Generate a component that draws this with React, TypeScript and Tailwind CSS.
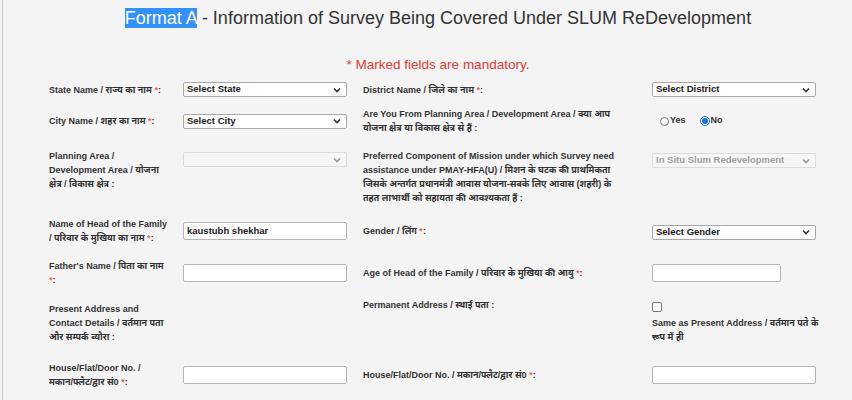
import React from 'react'

const font = { fontFamily: '"Liberation Sans", Arial, "Noto Sans", sans-serif' }

function Star() {
  return <span className="text-[#f06060]">*</span>
}

function Chevron({ muted }: { muted?: boolean }) {
  return (
    <svg width="8" height="6" viewBox="0 0 8 6" className="shrink-0">
      <path d="M1 1.5l3 3 3-3" fill="none" stroke={muted ? '#9a9a9a' : '#333'} strokeWidth="1.6" />
    </svg>
  )
}

function SelectBox({ text, disabled, className = '' }: { text?: string; disabled?: boolean; className?: string }) {
  return (
    <div
      className={`flex h-[15px] w-[164px] items-center justify-between rounded-[2px] border pl-[3px] pr-[5px] text-[9.5px] font-bold ${
        disabled ? 'border-[#dcdcdc] bg-[#f6f6f6] text-[#a0a0a0]' : 'border-[#a9a9a9] bg-white text-[#222]'
      } ${className}`}
    >
      <span>{text}</span>
      <Chevron muted={disabled} />
    </div>
  )
}

function TextBox({ value, w = 'w-[164px]' }: { value?: string; w?: string }) {
  return (
    <div className={`flex h-[18px] ${w} items-center rounded-[2px] border border-[#b5b5b5] bg-white pl-[3px] text-[9.5px] font-bold text-[#222]`}>
      {value}
    </div>
  )
}

function Label({ children, className = '' }: { children: React.ReactNode; className?: string }) {
  return <div className={`text-[9px] font-bold leading-[14px] text-[#333] ${className}`}>{children}</div>
}

const row = 'grid grid-cols-[134px_180px_289px_180px] pl-[46px]'

export default function App() {
  return (
    <div className="min-h-[400px] w-full bg-[#f4f4f4] pl-[2px]" style={font}>
      <div className="border-l border-[#c6c6c6] pt-[8px] pb-[20px]">
        <div className="pl-[21px]">
          <h1 className="text-center text-[18px] leading-[20px] text-[#333]">
            <span className="bg-[#3390ff] text-white">Format A</span> - Information of Survey Being Covered Under SLUM ReDevelopment
          </h1>

          <p className="mt-[28px] text-center text-[13.5px] leading-[18px] text-[#e33a35]">* Marked fields are mandatory.</p>
        </div>

        {/* row 1 */}
        <div className={`${row} mt-[5px] h-[21px] items-center`}>
          <Label>State Name / राज्य का नाम <Star />:</Label>
          <SelectBox text="Select State" />
          <Label>District Name / जिले का नाम <Star />:</Label>
          <SelectBox text="Select District" />
        </div>

        {/* row 2 */}
        <div className={`${row} mt-[7px] h-[28px] items-center`}>
          <Label>City Name / शहर का नाम <Star />:</Label>
          <SelectBox text="Select City" />
          <Label className="pr-[20px]">Are You From Planning Area / Development Area / क्या आप योजना क्षेत्र या विकास क्षेत्र से हैं :</Label>
          <div className="flex items-center pl-[8px] text-[9px] font-bold text-[#333]">
            <span className="h-[9px] w-[9px] rounded-full border border-[#767676] bg-white" />
            <span className="ml-[1px]">Yes</span>
            <span className="ml-[14px] flex h-[10px] w-[10px] items-center justify-center rounded-full border border-[#1a73e8] bg-white">
              <span className="h-[6px] w-[6px] rounded-full bg-[#1a73e8]" />
            </span>
            <span className="ml-[1px]">No</span>
          </div>
        </div>

        {/* row 3 */}
        <div className={`${row} mt-[14px] items-start`}>
          <Label className="pr-[15px]">Planning Area / Development Area / योजना क्षेत्र / विकास क्षेत्र :</Label>
          <SelectBox disabled className="mt-[3px]" />
          <Label className="pr-[34px]">
            Preferred Component of Mission under which Survey need assistance under PMAY-HFA(U) / मिशन के घटक की प्राथमिकता जिसके अन्तर्गत प्रधानमंत्री आवास योजना-सबके लिए आवास (शहरी) के तहत लाभार्थी को सहायता की आवश्यकता हैं :
          </Label>
          <SelectBox disabled text="In Situ Slum Redevelopment" className="mt-[4px]" />
        </div>

        {/* row 4 */}
        <div className={`${row} mt-[12px] h-[28px] items-center`}>
          <Label className="pr-[15px]">Name of Head of the Family / परिवार के मुखिया का नाम <Star />:</Label>
          <TextBox value="kaustubh shekhar" />
          <Label>Gender / लिंग <Star />:</Label>
          <SelectBox text="Select Gender" className="mt-[2px]" />
        </div>

        {/* row 5 */}
        <div className={`${row} mt-[14px] h-[28px] items-center`}>
          <Label className="pr-[15px]">Father's Name / पिता का नाम <Star />:</Label>
          <TextBox />
          <Label>Age of Head of the Family / परिवार के मुखिया की आयु <Star />:</Label>
          <TextBox w="w-[129px]" />
        </div>

        {/* row 6 */}
        <div className={`${row} mt-[11px] items-start`}>
          <Label className="mt-[4px] pr-[15px]">Present Address and Contact Details / वर्तमान पता और सम्पर्क ब्यौरा :</Label>
          <div />
          <Label>Permanent Address / स्थाई पता :</Label>
          <div className="pt-[4px]">
            <span className="block h-[10px] w-[10px] rounded-[2px] border border-[#767676] bg-white" />
            <Label className="mt-[4px]">Same as Present Address / वर्तमान पते के रूप में ही</Label>
          </div>
        </div>

        {/* row 7 */}
        <div className={`${row} mt-[17px] h-[26px] items-center`}>
          <Label className="pr-[15px]">
            House/Flat/Door No. / <span className="whitespace-nowrap">मकान/फ्लैट/द्वार सं0 <Star />:</span>
          </Label>
          <TextBox />
          <Label>House/Flat/Door No. / मकान/फ्लैट/द्वार सं0 <Star />:</Label>
          <TextBox />
        </div>
      </div>
    </div>
  )
}
